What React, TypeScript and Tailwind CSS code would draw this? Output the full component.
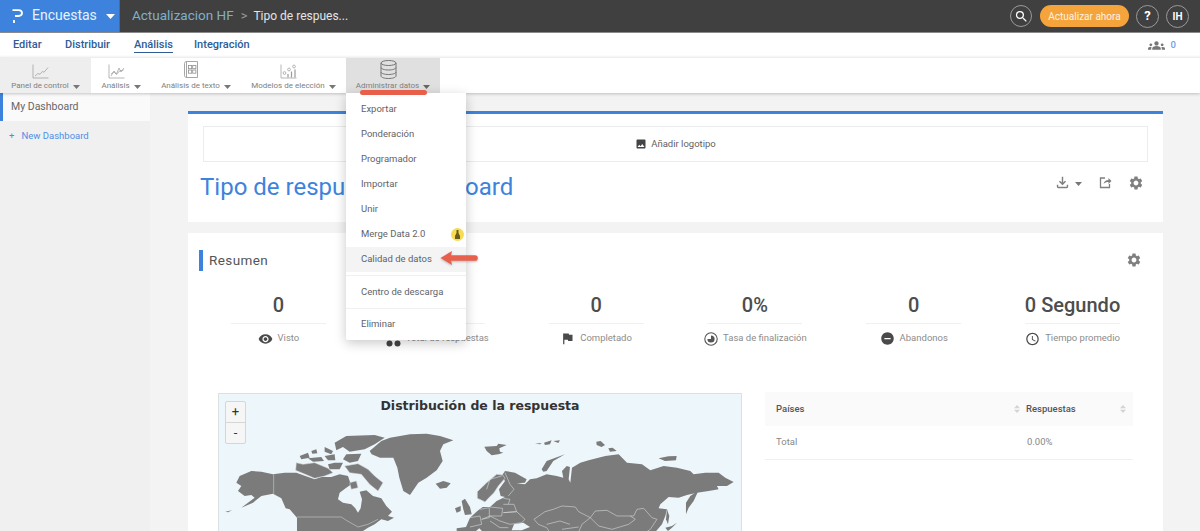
import React from "react";
import { MdVisibility, MdFlag, MdAccessTime, MdRemoveCircle, MdSettings, MdImage, MdSearch, MdGroups, MdOutlineFileDownload } from "react-icons/md";

const Caret = ({ c = "#777" }: { c?: string }) => (
  <svg width="7" height="4" viewBox="0 0 7 4" className="ml-[4px] mt-[2px] shrink-0"><path d="M0 0h7L3.500 4z" fill={c} /></svg>
);

const LineChartIcon = ({ v }: { v: number }) => (
  <svg width="17" height="15" viewBox="0 0 17 15" fill="none" stroke="#9a9a9a" strokeWidth="0.7">
    <path d="M1 0.500v13.500H16.500" />
    {v === 0 && <path d="M3 12l3-2.500 2 .8 2.500-3 1.500 1L16 3.500" />}
    {v === 1 && <><path d="M3 12l3-5 2.500 3 2.500-6 2 4 3-4" /><path d="M3 10l3-2 2.500 2.500 3-3.500 4-1" /></>}
    {v === 2 && <><circle cx="4.500" cy="9" r="1.400" /><circle cx="9" cy="5.500" r="1.400" /><circle cx="14" cy="2.500" r="1.400" /><path d="M8 13.500V10M11.500 13.500V7.500M15 13.500V5.500" strokeWidth="1.200" /></>}
  </svg>
);

const TextIcon = () => (
  <svg width="14" height="18" viewBox="0 0 14 18" fill="none" stroke="#8f8f8f" strokeWidth="0.8">
    <path d="M2.500 0.500h11v16h-11c-1.200 0-2-.8-2-2V2.500c0-1.200.8-2 2-2z" />
    <path d="M2.500 0.500v16" />
    <rect x="4.500" y="4.500" width="3.200" height="3.200" /><rect x="8.700" y="4.500" width="3.200" height="3.200" />
    <rect x="4.500" y="9" width="3.200" height="3.200" /><rect x="8.700" y="9" width="3.200" height="3.200" />
  </svg>
);

const DbIcon = () => (
  <svg width="17" height="19" viewBox="0 0 17 19" fill="none" stroke="#757575" strokeWidth="1">
    <ellipse cx="8.500" cy="3" rx="7.500" ry="2.500" />
    <path d="M1 3v13c0 1.400 3.400 2.500 7.500 2.500S16 17.400 16 16V3" />
    <path d="M1 7.500c0 1.400 3.400 2.500 7.500 2.500S16 8.900 16 7.500" />
    <path d="M1 12c0 1.400 3.400 2.500 7.500 2.500S16 13.400 16 12" />
  </svg>
);

const Tool = ({ icon, label, cls, active }: { icon: React.ReactNode; label: string; cls: string; active?: boolean }) => (
  <div className={`flex flex-col items-center h-full ${cls}`}>
    <div className="h-[21px] flex items-end justify-center pr-[10px]">{icon}</div>
    <div className="flex items-center text-[8px] leading-[13px] text-[#808080] whitespace-nowrap">
      {label}
      <Caret c={active ? "#666" : "#777"} />
    </div>
  </div>
);

const Pie = () => (
  <svg width="14" height="14" viewBox="0 0 14 14">
    <circle cx="7" cy="7" r="6.200" fill="none" stroke="#555" strokeWidth="1.100" />
    <path d="M7 3.400A3.600 3.600 0 1 1 3.400 7H7z" fill="#555" />
  </svg>
);

const Dots = () => (
  <svg width="15" height="7" viewBox="0 0 15 7" className="translate-y-[5px]"><circle cx="3.500" cy="3.500" r="3" fill="#444" /><circle cx="11.500" cy="3.500" r="3" fill="#444" /></svg>
);

const Sort = () => (
  <svg width="6" height="8" viewBox="0 0 6 8" className="shrink-0"><path d="M0 3.300L3 0l3 3.300zM0 4.700h6L3 8z" fill="#d4d4d4" /></svg>
);

const Stat = ({ value, icon, label }: { value: string; icon: React.ReactNode; label: string }) => (
  <div className="flex flex-col items-center w-[159px]">
    <div className="h-[36px] flex items-center text-[20px] font-medium leading-none text-[#4d4d4d]">{value}</div>
    <div className="w-[95px] h-px bg-[#f0f0f0]" />
    <div className="h-[29px] flex items-center gap-[5px] text-[9.500px] text-[#8c8c8c] whitespace-nowrap">
      <span className="w-[15px] flex justify-center text-[#4a4a4a]">{icon}</span>
      {label}
    </div>
  </div>
);

const WorldMap = () => (
  <svg viewBox="219 393 522 138" className="block w-full h-full" preserveAspectRatio="none">
    <g transform="translate(218 420) scale(0.3333)" fill="#7b7b7b" stroke="#d4dadc" strokeWidth="1.600" strokeLinejoin="round">
      <path d="M55 185L65 165L100 150L130 152L165 160L200 155L235 155L262 165L290 175L310 168L340 168L365 160L390 165L395 180L400 190L385 200L365 215L360 235L375 245L400 250L412 262L420 275L428 262L432 235L425 212L445 208L465 225L490 232L505 255L522 272L510 285L528 290L510 300L490 295L470 310L450 320L420 340L237 340L237 290L215 265L203 262L190 232L165 218L130 225L105 245L70 260L110 230L100 222L80 225L60 210L70 195Z" stroke="none" />
      <path d="M167 160V218M237 288H370L385 298L420 318L450 310L480 295" fill="none" />
      <path d="M22 272L42 268L30 274Z" stroke="none" />
      <path d="M255 130L290 125L330 142L345 155L320 165L290 172L262 160L233 148L235 125Z" />
      <path d="M245 105L270 95L275 110L250 115Z" stroke="none" />
      <path d="M280 90L295 85L298 97L283 98Z" stroke="none" />
      <path d="M270 112L310 108L318 120L285 122Z" stroke="none" />
      <path d="M320 78L345 90L340 100L320 92Z" stroke="none" />
      <path d="M320 105L350 100L352 118L330 118Z" stroke="none" />
      <path d="M350 65L385 45L470 42L500 50L470 70L440 85L395 92L375 78L355 88Z" stroke="none" />
      <path d="M385 100L430 98L420 120L395 125L375 115Z" stroke="none" />
      <path d="M350 125L375 125L365 145L335 145L330 130Z" stroke="none" />
      <path d="M380 135L420 128L450 145L470 165L495 185L480 210L455 190L430 160L395 155Z" />
      <path d="M395 185L415 180L420 200L400 205Z" />
    </g>
    <g transform="translate(390 420) scale(0.3333)" fill="#7b7b7b" stroke="#d4dadc" strokeWidth="1.800" strokeLinejoin="round">
      <path d="M-61 90L-26 60L0 50L30 45L60 40L110 38L150 45L190 58L160 70L150 90L158 120L140 148L110 170L85 185L60 222L40 210L28 170L22 140L10 110L-30 110L-55 100Z" stroke="none" />
      <path d="M137 188L160 180L182 187L170 200L150 203Z" stroke="none" />
      <path d="M283 77L320 75L325 68L350 72L328 82L330 92L340 95L325 100L305 103L290 90Z" stroke="none" />
      <path d="M435 68L455 66L450 70Z" stroke="none" />
      <path d="M462 65L485 58L480 70L465 72Z" stroke="none" />
      <path d="M490 60L510 58L505 66Z" stroke="none" />
      <path d="M455 145L470 120L525 100L490 120L470 150L460 152Z" stroke="none" />
      <path d="M215 240L225 233L240 258L245 280L225 282L220 265Z" stroke="none" />
      <path d="M195 262L212 255L212 270L200 275Z" stroke="none" />
      <path d="M619 62L632 60L645 72L635 78L620 72Z" stroke="none" />
      <path d="M655 82L668 80L680 90L660 92Z" stroke="none" />
      <path d="M806 112L835 106L860 105L858 118L825 120Z" stroke="none" />
      <path d="M200 340L200 322L228 318L240 290L262 270L278 258L300 258L320 240L345 228L332 225L327 205L345 180L335 165L345 150L375 155L410 175L405 185L380 187L405 190L420 175L440 172L470 160L500 165L520 170L516 150L530 135L540 138L536 175L541 185L546 140L571 125L596 118L646 105L686 100L711 125L756 130L781 148L821 135L861 140L901 150L911 160L946 155L986 155L1006 170L1031 183L1011 195L981 195L986 205L956 210L921 215L891 222L866 230L836 228L811 250L806 262L831 265L826 285L816 310L790 340Z" stroke="none" />
      <path d="M262 232L262 212L290 185L320 160L338 162L345 172L325 195L312 215L295 232L285 243L275 238Z" />
      <path d="M290 205L300 175L335 165" fill="none" />
      <path d="M888 245L901 225L926 208L911 240L896 260L888 280Z" stroke="none" />
      <path d="M831 265L838 285L834 310L828 295Z" stroke="none" />
      <path d="M826 320L846 315L861 305L846 320L834 330Z" stroke="none" />
      <path d="M345 155L360 190L372 205L355 225M340 232L360 235L355 250M340 250L372 250L380 272L340 275M340 275L380 272L405 295L395 305L360 310L330 300M300 258L338 262L335 285L300 285M270 265L298 260L298 290L275 295M240 290L270 285L275 310L240 318M275 295L300 285L330 300M300 300L330 320L355 320" fill="none" />
      <path d="M432 295L465 272L490 265L516 255L556 258L566 272L601 290M601 290L576 310L566 333M516 325L566 318M432 295L445 310L470 320L480 335M470 310L510 300L540 310M601 290L616 270L651 268L681 285L731 285L741 265L761 262L786 290L801 295L781 325L766 335M601 290L626 315L666 325L716 310L736 295L721 285" fill="none" />
      <path d="M372 310L400 305L420 318L395 328L365 328Z" fill="#edf6fa" stroke="none" />
      <path d="M240 345L268 322L290 345Z" fill="#edf6fa" stroke="none" />
    </g>
  </svg>
);

const MenuItem = ({ label, cls = "", badge }: { label: string; cls?: string; badge?: boolean }) => (
  <div className={`h-[25px] flex items-center justify-between pl-[15px] pr-[2px] text-[9.500px] text-[#5f6368] ${cls}`}>
    {label}
    {badge && (
      <span className="w-[13px] h-[13px] rounded-full bg-[#f7dc4f] flex items-center justify-center">
        <svg width="7" height="9" viewBox="0 0 7 9"><path d="M2.500 0h2v3l1.500 3v3H1V6l1.500-3z" fill="#6b5a1e" /></svg>
      </span>
    )}
  </div>
);

export default function App() {
  return (
    <div className="relative w-[1200px] h-[531px] overflow-hidden bg-[#f3f3f3] flex flex-col font-['Roboto',sans-serif]">
      <header className="h-[33px] shrink-0 bg-[#404040] border-b border-[#8a8a8a] flex items-center">
        <div className="w-[120px] h-full bg-[#3d83dd] flex items-center pl-[12px] border-r border-[#2f6fc0]">
          <svg width="11" height="14" viewBox="0 0 11 14" fill="none" stroke="#fff" strokeWidth="1.800">
            <path d="M0.500 1.200h6c2.100 0 3.500 1.100 3.500 2.900S8.600 7 6.500 7H3" />
            <path d="M2 11v3" />
          </svg>
          <span className="ml-[9px] text-[14px] text-[#e8f1fb] whitespace-nowrap -mt-[1px]">Encuestas</span>
          <svg width="9" height="5" viewBox="0 0 9 5" className="ml-[9px]"><path d="M0 0h9L4.500 5z" fill="#fff" /></svg>
        </div>
        <span className="ml-[12px] text-[13.500px] text-[#7fb0c9] whitespace-nowrap -mt-[1px]">Actualizacion HF</span>
        <span className="ml-[7px] text-[13px] text-[#9a9a9a] -mt-[1px]">&gt;</span>
        <span className="ml-[6px] text-[12px] text-[#e4e4e4] whitespace-nowrap -mt-[1px]">Tipo de respues...</span>
        <div className="ml-auto flex items-center pr-[11px]">
          <div className="w-[22px] h-[22px] rounded-full border border-[#9a9a9a] flex items-center justify-center text-white"><MdSearch size={15} /></div>
          <div className="ml-[8px] w-[89px] h-[22px] rounded-full bg-[#f5a33b] flex items-center justify-center text-[10px] text-[#fdf3e0] whitespace-nowrap">Actualizar ahora</div>
          <div className="ml-[7px] w-[23px] h-[23px] rounded-full border border-[#9a9a9a] flex items-center justify-center text-[13px] font-bold text-white">?</div>
          <div className="ml-[7px] w-[23px] h-[23px] rounded-full border border-[#9a9a9a] flex items-center justify-center text-[10px] font-bold text-white">IH</div>
        </div>
      </header>

      <nav className="h-[24px] shrink-0 bg-white flex items-center pl-[13px] text-[11px] font-medium text-[#2f5c97] pr-[24px]">
        <span className="w-[52px]">Editar</span>
        <span className="w-[69px]">Distribuir</span>
        <span className="w-[60px]"><span className="border-b border-[#2f5c97] leading-[14px] inline-block">Análisis</span></span>
        <span>Integración</span>
        <div className="ml-auto flex items-center gap-[6px] text-[9.500px] text-[#6aa0e8]">
          <MdGroups size={17} color="#777" />
          <span>0</span>
        </div>
      </nav>

      <div className="relative z-10 h-[36px] shrink-0 bg-white border-t border-[#eeeeee] shadow-[0_1px_3px_rgba(0,0,0,0.22)] flex">
        <Tool icon={<LineChartIcon v={0} />} label="Panel de control" cls="w-[91px] bg-[#eeeeee]" />
        <Tool icon={<LineChartIcon v={1} />} label="Análisis" cls="w-[60px]" />
        <Tool icon={<TextIcon />} label="Análisis de texto" cls="w-[90px]" />
        <Tool icon={<LineChartIcon v={2} />} label="Modelos de elección" cls="w-[105px]" />
        <Tool icon={<DbIcon />} label="Administrar datos" cls="w-[94px] bg-[#e0e0e0]" active />
      </div>

      <div className="flex flex-1 min-h-0">
        <aside className="w-[150px] shrink-0 bg-[#f0f0f0]">
          <div className="h-[28px] bg-[#fafafa] border-l-[3px] border-[#3d83dd] pl-[8px] flex items-center text-[10.500px] text-[#666]">My Dashboard</div>
          <div className="mt-[7px] h-[16px] pl-[9px] flex items-center text-[9.500px] text-[#4d8fe6]">+&nbsp;&nbsp;&nbsp;New Dashboard</div>
        </aside>

        <main className="flex-1 min-w-0 pl-[38px] pr-[37px] pt-[18px] flex flex-col gap-[11px]">
          <section className="h-[111px] shrink-0 bg-white border-t-[3px] border-[#3d83dd] pt-[12px] px-[15px]">
            <div className="h-[36px] border border-[#ececec] flex items-center justify-center gap-[4px] text-[9.500px] text-[#5f5f5f]">
              <MdImage size={12} color="#444" />
              Añadir logotipo
            </div>
            <div className="flex items-center -ml-[3px] mt-[10px] h-[30px]">
              <h1 className="text-[24px] leading-none text-[#3d83dd] whitespace-nowrap">Tipo de respuesta Dashboard</h1>
              <div className="ml-auto flex items-center text-[#7f7f7f] mr-[4px] -mt-[9px]">
                <MdOutlineFileDownload size={17} />
                <Caret />
                <svg width="13" height="13" viewBox="0 0 13 13" fill="none" stroke="#7f7f7f" strokeWidth="1.300" className="ml-[17px]">
                  <path d="M6 2H1.500v9.500h9V8" />
                  <path d="M4.500 8c.5-2.500 2.500-4 5-4V2l3 3-3 3V6c-2 0-3.500.5-5 2z" fill="#7f7f7f" stroke="none" />
                </svg>
                <span className="ml-[16px]"><MdSettings size={16} /></span>
              </div>
            </div>
          </section>

          <section className="flex-1 min-h-0 bg-white pl-[11px] pr-[11px] pt-[17px] overflow-hidden">
            <div className="flex items-center h-[21px]">
              <div className="w-[4px] h-[21px] bg-[#3d83dd]" />
              <span className="ml-[6px] text-[13.500px] leading-[18px] tracking-[0.4px] text-[#555] -mt-[1px]">Resumen</span>
              <span className="ml-auto mr-[10px] -mt-[2px] text-[#7f7f7f]"><MdSettings size={16} /></span>
            </div>
            <div className="mt-[16px] flex">
              <Stat value="0" icon={<MdVisibility size={16} />} label="Visto" />
              <Stat value="0" icon={<Dots />} label="Total de respuestas" />
              <Stat value="0" icon={<MdFlag size={15} />} label="Completado" />
              <Stat value="0%" icon={<Pie />} label="Tasa de finalización" />
              <Stat value="0" icon={<MdRemoveCircle size={15} />} label="Abandonos" />
              <Stat value="0 Segundo" icon={<MdAccessTime size={16} />} label="Tiempo promedio" />
            </div>
            <div className="mt-[40px] flex pl-[19px]">
              <div className="relative w-[524px] h-[139px] shrink-0 border border-[#d7e3e0] border-b-0 bg-[#edf6fa]">
                <WorldMap />
                <div className="absolute top-[3px] left-0 right-0 text-center text-[12.500px] font-bold font-['DejaVu_Sans',sans-serif] text-[#333]">Distribución de la respuesta</div>
                <div className="absolute top-[7px] left-[6px] w-[21px] border border-[#d6d6d6] rounded-[2px] bg-[#f6f6f6]">
                  <div className="h-[21px] flex items-center justify-center text-[13px] text-[#333] border-b border-[#d6d6d6]">+</div>
                  <div className="h-[20px] flex items-center justify-center text-[13px] text-[#333]">-</div>
                </div>
              </div>
              <div className="ml-[23px] w-[368px] shrink-0 text-[9.500px]">
                <div className="h-[34px] bg-[#fafafa] flex items-center font-medium text-[#555] pl-[11px] -mt-[1px]">
                  <span className="w-[238px]">Países</span>
                  <Sort />
                  <span className="ml-[6px] w-[94px]">Respuestas</span>
                  <Sort />
                </div>
                <div className="h-[34px] flex items-center border-b border-[#f0f0f0] text-[#888] pl-[11px]">
                  <span className="w-[251px]">Total</span>
                  <span>0.00%</span>
                </div>
              </div>
            </div>
          </section>
        </main>
      </div>

      {/* Dropdown menu lying over the page */}
      <div className="absolute z-20 left-[346px] top-[93px] w-[120px] h-[247px] bg-white shadow-[0_3px_12px_rgba(0,0,0,0.22)] pt-[4px] rounded-b-[2px]">
        <MenuItem label="Exportar" />
        <MenuItem label="Ponderación" />
        <MenuItem label="Programador" />
        <MenuItem label="Importar" />
        <MenuItem label="Unir" />
        <MenuItem label="Merge Data 2.0" badge />
        <MenuItem label="Calidad de datos" cls="bg-[#f4f4f4]" />
        <div className="mt-[3px] h-px bg-[#f0f0f0]" />
        <MenuItem label="Centro de descarga" cls="mt-[4px]" />
        <div className="mt-[3px] h-px bg-[#f0f0f0]" />
        <MenuItem label="Eliminar" cls="mt-[3px]" />
      </div>

      {/* Annotations drawn on the screenshot */}
      <div className="absolute z-30 left-[360px] top-[90px] w-[67px] h-[5px] rounded-full bg-[#e8604c]" />
      <svg className="absolute z-30 left-[440px] top-[250px] drop-shadow-[0_1px_1px_rgba(0,0,0,0.25)]" width="38" height="16" viewBox="0 0 38 16">
        <path d="M0.500 8L12 1L11 5.200H35a2.800 2.800 0 0 1 0 5.600H11L12 15z" fill="#e8604c" />
      </svg>
    </div>
  );
}
